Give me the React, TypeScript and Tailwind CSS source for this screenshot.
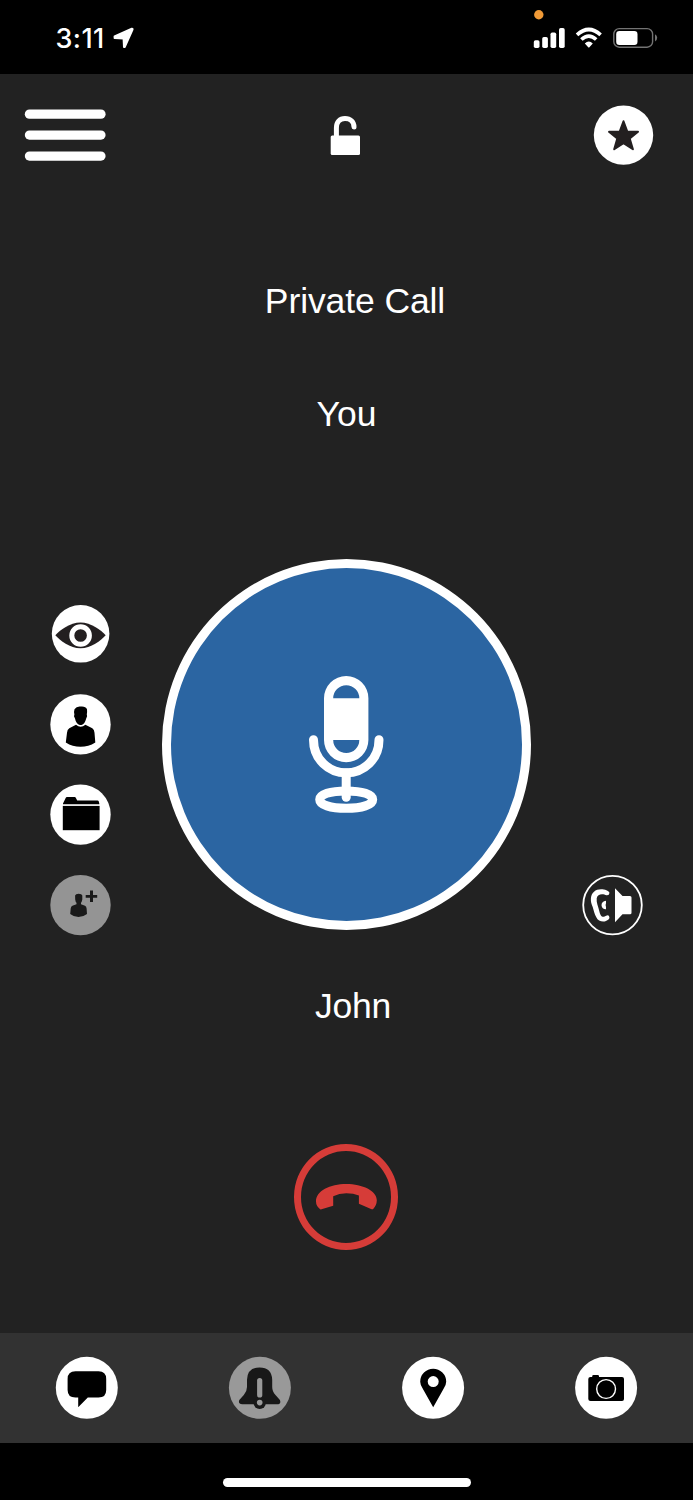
import type { ReactNode } from "react";

type IconProps = { box: string; className: string; children: ReactNode };

// Every drawing uses screen units, so one unit equals one pixel.
function Drawing({ box, className, children }: IconProps) {
  return (
    <svg viewBox={box} className={`block shrink-0 ${className}`} fill="currentColor" aria-hidden="true">
      {children}
    </svg>
  );
}

function StatusBar() {
  return (
    <div className="flex h-[74px] shrink-0 items-start justify-between bg-black">
      <div className="flex items-start pt-[22px] pl-[55.5px]">
        <span className="w-[56.5px] font-[Inter,sans-serif] text-[27px] leading-[34px] font-medium tracking-[0.4px] whitespace-nowrap">
          3:11
        </span>
        <Drawing box="112 27 22 22" className="mt-[5px] h-[22px] w-[22px]">
          <path
            d="M114.5 36.2 131.8 28.6Q133 28.3 132.6 29.6L124.9 47 123.9 47 123.5 38.7 114.5 38.1Z"
            stroke="currentColor"
            strokeWidth="1.8"
            strokeLinejoin="round"
          />
        </Drawing>
      </div>
      <Drawing box="530 0 163 60" className="h-[60px] w-[163px]">
        <circle cx="538.8" cy="14.8" r="4.7" fill="#f09a37" />
        <rect x="533.8" y="40.3" width="5.7" height="7.7" rx="1.7" />
        <rect x="542.2" y="37" width="5.7" height="11" rx="1.7" />
        <rect x="550.5" y="32.5" width="5.7" height="15.5" rx="1.7" />
        <rect x="559" y="28" width="5.7" height="20" rx="1.7" />
        <g fill="none" stroke="currentColor" strokeWidth="3.7">
          <path d="M577 34.8Q588.8 24.2 600.6 34.8" />
          <path d="M581.4 39.5Q588.8 32.7 596.2 39.5" />
        </g>
        <path d="M584.8 43.4Q588.8 39.6 592.8 43.4L589.6 47Q588.8 48 588 47Z" />
        <rect x="613.8" y="28.6" width="38.8" height="18.6" rx="5.5" fill="none" stroke="#737373" strokeWidth="1.4" />
        <rect x="616.2" y="31" width="21.3" height="14" rx="3.2" />
        <path d="M655 34.3Q657.2 35.5 657.2 37.8Q657.2 40.2 655 41.4Z" fill="#737373" />
      </Drawing>
    </div>
  );
}

function Header() {
  return (
    <header className="flex h-[122px] shrink-0 items-center justify-between pr-[40px] pl-[24px]">
      <Drawing box="24 109 82 52" className="h-[52px] w-[82px]">
        <rect x="24.8" y="109.5" width="80.8" height="9.3" rx="4.65" />
        <rect x="24.8" y="130.4" width="80.8" height="9.3" rx="4.65" />
        <rect x="24.8" y="151.4" width="80.8" height="9.3" rx="4.65" />
      </Drawing>
      <Drawing box="330 115 31 41" className="mr-[9px] h-[41px] w-[31px]">
        <path
          d="M336.4 137V128C336.4 122 339.8 118.6 345 118.6C350.4 118.6 353.9 122 354 127"
          fill="none"
          stroke="currentColor"
          strokeWidth="5"
          strokeLinecap="round"
        />
        <rect x="330.7" y="135.4" width="29.3" height="19.6" rx="1.5" />
      </Drawing>
      <Drawing box="593 105 61 60" className="-mr-px h-[60px] w-[61px]">
        <circle cx="623.5" cy="135.1" r="29.7" />
        <path
          d="M623.5 121.3 627.2 131.4 638 131.8 629.7 138.6 632.9 149.2 623.5 143.2 614.2 149.2 617.3 138.6 609 131.8 619.8 131.4Z"
          fill="#231f20"
          stroke="#231f20"
          strokeWidth="2"
          strokeLinejoin="round"
        />
      </Drawing>
    </header>
  );
}

function SideActions() {
  return (
    <div className="mt-[46px] flex w-[60px] flex-col items-start">
      <Drawing box="50 605 61 58" className="h-[58px] w-[61px]">
        <circle cx="80.6" cy="633.8" r="28.8" />
        <path
          d="M55.3 635.3C60 630 70 622.5 80.5 622.5S101 630 105.7 635.3C101 640.5 91 648.3 80.5 648.3S60 640.5 55.3 635.3Z"
          fill="#231f20"
        />
        <circle cx="80.6" cy="635.5" r="8.8" fill="#231f20" stroke="#fff" strokeWidth="5" />
      </Drawing>
      <Drawing box="50 694 61 61" className="mt-[31px] h-[61px] w-[61px]">
        <circle cx="80.5" cy="724.4" r="30.2" />
        <g fill="#000">
          <path d="M74.5 709.2Q76.5 706.2 80.5 706.6Q85.5 706 87 709.2Q87.3 712 86.8 714.4Q87.7 715.8 86.2 718.5Q84.8 724 81.5 725H79.8Q76 723.8 75 718.5Q73.3 715.8 74.4 714.4Q73.6 712 74.5 709.2Z" />
          <path d="M76 724.8Q80.7 728.6 85.4 724.8L92.3 728.2Q94.3 729.5 94.5 732.8L95.3 742.4Q88.5 746.8 80.5 746.8T65.8 742.4L67 732.8Q67.2 729.4 69.3 728.2Z" />
        </g>
      </Drawing>
      <Drawing box="50 784 61 61" className="mt-[29px] h-[61px] w-[61px]">
        <circle cx="80.5" cy="814.6" r="30.2" />
        <g fill="#000">
          <path d="M63 804.3V803.4L65.8 797.7Q66.1 797 67 797H74.6Q75.5 797 75.8 797.8L77.2 800.5H97.5Q98.5 800.5 98.8 801.5L99.3 803.4V804.3Z" />
          <rect x="62.8" y="805.9" width="36.8" height="24.3" />
        </g>
      </Drawing>
      <Drawing box="50 874 61 62" className="mt-[29px] h-[62px] w-[61px]">
        <circle cx="80.5" cy="905.1" r="30.2" fill="#949494" />
        <g fill="#191919">
          <path d="M75.1 895.5Q75.5 893.8 78.7 893.8T82.3 895.5L82.3 899.5Q81.8 902 81 902.8V904.2L85 905.7Q86.4 906.3 86.6 908.5L87 914Q83.5 916.9 78.5 916.9T70.2 914L70.7 908.5Q70.9 906.3 72.4 905.7L76.5 904.2V902.8Q75.5 902 75.2 899.5Z" />
          <path d="M90 890.6H93V894.9H97.2V897.8H93V902.1H90V897.8H85.7V894.9H90Z" />
        </g>
      </Drawing>
    </div>
  );
}

function TalkButton() {
  return (
    <button className="flex h-[370.5px] w-[369px] items-center justify-center rounded-[50%] border-[9.5px] border-white bg-[#2b65a2]">
      <Drawing box="306 672 80 145" className="h-[145px] w-[80px]">
        <path
          fillRule="evenodd"
          d="M324 698.2A22.2 22.2 0 0 1 368.4 698.2V740A22.2 22.2 0 0 1 324 740ZM333.2 698.2H359.3A13.05 13.05 0 0 0 333.2 698.2ZM333.2 740A13.05 13.05 0 0 0 359.3 740Z"
        />
        <g fill="none" stroke="currentColor" strokeWidth="9" strokeLinecap="round">
          <path d="M313.5 739.7C313.5 759 328.5 772.8 346.2 772.8S379 759 379 739.7" />
          <path d="M346.2 773V797.2" />
          <path d="M319.7 799.4C319.7 794.5 330 790.9 346.2 790.9S372.7 794.5 372.7 799.4C372.7 804.8 362 808.3 346.2 808.3S319.7 804.8 319.7 799.4Z" />
        </g>
      </Drawing>
    </button>
  );
}

function AudioRoute() {
  return (
    <Drawing box="582 874 61 62" className="mt-[315px] h-[62px] w-[61px]">
      <circle cx="612.5" cy="905.1" r="29.3" fill="none" stroke="currentColor" strokeWidth="1.8" />
      <path
        d="M590.9 898.5C591.3 892.5 595.5 889.2 601 889.2C605 889.2 608.5 890.5 609.5 892.8Q609.3 895.7 606.5 895.3C603.2 893.5 597.3 893.4 596.7 898.3C596.2 903 598.2 906 599.2 910.7C600 914.5 601.5 917.3 604 916.8C606.2 916.4 607.6 914.3 609 916Q610.2 918 608.5 919.5C605 922.7 598.5 922.2 596.3 917.2C594.3 914.2 593.9 910.5 592.7 907C591.4 903.8 590.7 902 590.9 898.5Z"
      />
      <path d="M606 900.8Q601.5 901.5 601.5 905.3Q602 909.3 606 909.2V906.9Q605.2 905.1 606 903.3Z" />
      <path d="M615 888.3 622.5 896H630Q631.5 896 631.5 897.5V912.8Q631.5 914.3 630 914.3H622.5L615 922.3Z" />
    </Drawing>
  );
}

function HangUp() {
  return (
    <button className="mr-[1px] flex h-[105.5px] w-[104px] shrink-0 items-center justify-center rounded-[50%] border-[7px] border-[#d63c38] text-[#d63c38]">
      <Drawing box="314 1182 64 30" className="h-[30px] w-[64px]">
        <path d="M320.2 1209.3Q316 1206 316 1201.5C315.8 1191 330 1184.1 346.3 1184.1S376.8 1191 376.8 1200.3Q376.8 1205.3 373 1209.2Q372.3 1209.6 371 1209L358.9 1203.8V1195.6Q353.5 1193.2 346.3 1193.2T333.2 1196.2V1205.8L321.5 1209.3Q320.7 1209.6 320.2 1209.3Z" />
      </Drawing>
    </button>
  );
}

function BottomBar() {
  return (
    <nav className="grid h-[110px] shrink-0 grid-cols-4 place-items-center bg-[#323232]">
      <Drawing box="56 1357 62 62" className="h-[62px] w-[62px] overflow-visible">
        <circle cx="86.8" cy="1387.8" r="31" />
        <path
          d="M75.5 1371.3H98.5Q106.2 1371.3 106.2 1379V1390Q106.2 1397.6 98.5 1397.6H87.8L78.2 1407.3V1397.6H75.5Q67.6 1397.6 67.6 1390V1379Q67.6 1371.3 75.5 1371.3Z"
          fill="#000"
        />
      </Drawing>
      <Drawing box="229 1357 62 62" className="h-[62px] w-[62px] overflow-visible">
        <circle cx="259.9" cy="1387.8" r="31" fill="#999" />
        <g fill="#181818">
          <path d="M247 1379.7Q247.5 1367.5 259.6 1367.5T272.2 1379.7V1387Q272.2 1391.5 275.5 1395L279.9 1400Q281.5 1404.2 277 1404.2H242.3Q237.8 1404.2 239.3 1400L243.8 1395Q247 1391.5 247 1387Z" />
          <circle cx="259.7" cy="1402.8" r="6.2" />
        </g>
        <g fill="#999">
          <rect x="257.1" y="1378" width="5.2" height="19.5" rx="2.6" />
          <circle cx="259.7" cy="1402.6" r="2.8" />
        </g>
      </Drawing>
      <Drawing box="402 1357 62 62" className="h-[62px] w-[62px] overflow-visible">
        <circle cx="433.1" cy="1387.8" r="31" />
        <path
          fillRule="evenodd"
          d="M433.2 1407.2 422.8 1388.8Q420.2 1384.8 420.2 1381.7A13 13 0 0 1 446.2 1381.7Q446.2 1384.8 443.6 1388.8ZM433.2 1376.1A5.5 5.5 0 0 0 433.2 1387.1A5.5 5.5 0 0 0 433.2 1376.1Z"
          fill="#000"
        />
      </Drawing>
      <Drawing box="575 1357 62 62" className="h-[62px] w-[62px] overflow-visible">
        <circle cx="606.1" cy="1387.8" r="31" />
        <path
          d="M590.5 1377H592.2V1376.3Q592.2 1375 593.6 1375H597.8Q599 1375 599 1376.3V1377H622Q624 1377 624 1379V1399Q624 1401 622 1401H590.5Q588.3 1401 588.3 1399V1379Q588.3 1377 590.5 1377Z"
          fill="#000"
        />
        <circle cx="606.1" cy="1389" r="9.4" fill="none" stroke="currentColor" strokeWidth="1.4" />
      </Drawing>
    </nav>
  );
}

export default function App() {
  return (
    <div className="flex h-[1500px] w-[693px] flex-col overflow-hidden bg-[#222222] font-['Liberation_Sans',Arial,sans-serif] text-white">
      <StatusBar />
      <Header />
      <main className="flex flex-1 flex-col items-center text-[35.5px] leading-[40px]">
        <h1 className="mt-[85px] ml-[17px] tracking-[-0.1px]">Private Call</h1>
        <h2 className="mt-[73px]">You</h2>
        <section className="mt-[125px] flex h-[371px] w-full items-start justify-between pr-[50px] pl-[50px]">
          <SideActions />
          <TalkButton />
          <AudioRoute />
        </section>
        <p className="mt-[56px] ml-[13px] tracking-[-0.2px]">John</p>
        <div className="mt-[118px]">
          <HangUp />
        </div>
      </main>
      <BottomBar />
      <footer className="flex h-[57px] shrink-0 justify-center bg-black pt-[35px]">
        <div className="h-[8.5px] w-[248px] rounded-full bg-white" />
      </footer>
    </div>
  );
}
